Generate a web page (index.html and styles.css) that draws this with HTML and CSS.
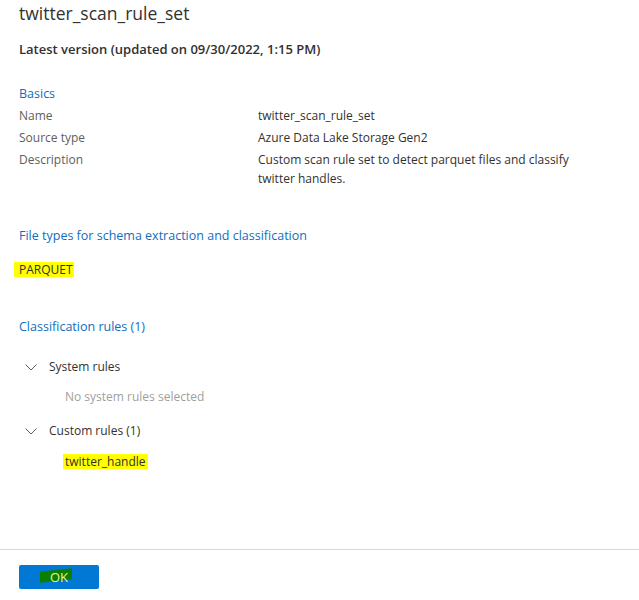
FILE: index.html
```html
<!DOCTYPE html>
<html>
<head>
<meta charset="utf-8">
<link rel="stylesheet" href="styles.css">
</head>
<body>
<div class="panel">
  <div class="content">
    <h1 class="title">twitter_scan_rule_set</h1>
    <div class="version">Latest version (updated on 09/30/2022, 1:15 PM)</div>

    <div class="section-head basics">Basics</div>
    <div class="props">
      <div class="label">Name</div><div class="value">twitter_scan_rule_set</div>
      <div class="label">Source type</div><div class="value">Azure Data Lake Storage Gen2</div>
      <div class="label">Description</div><div class="value">Custom scan rule set to detect parquet files and classify twitter handles.</div>
    </div>

    <div class="section-head filetypes">File types for schema extraction and classification</div>
    <div class="filetype"><span class="hl hl-parquet">PARQUET</span></div>

    <div class="section-head classrules">Classification rules (1)</div>
    <div class="group">
      <div class="group-head">
        <svg class="chev" width="12" height="7" viewBox="0 0 12 7"><path d="M0.5 0.5 L6 6 L11.5 0.5" fill="none" stroke="#605e5c" stroke-width="1"/></svg>
        <span>System rules</span>
      </div>
      <div class="group-body muted">No system rules selected</div>
    </div>
    <div class="group">
      <div class="group-head">
        <svg class="chev" width="12" height="7" viewBox="0 0 12 7"><path d="M0.5 0.5 L6 6 L11.5 0.5" fill="none" stroke="#605e5c" stroke-width="1"/></svg>
        <span>Custom rules (1)</span>
      </div>
      <div class="group-body"><span class="hl hl-rule">twitter_handle</span></div>
    </div>
  </div>
  <div class="footer">
    <button class="ok"><span class="ok-mark"></span><span class="ok-text">OK</span></button>
  </div>
</div>
</body>
</html>
```
FILE: styles.css
```css
html, body {
  margin: 0;
  padding: 0;
  background: #ffffff;
}
body {
  font-family: "Open Sans", "Noto Sans", sans-serif;
  color: #323130;
  font-size: 12px;
}
.panel {
  width: 639px;
  height: 600px;
  display: flex;
  flex-direction: column;
}
.content {
  flex: none;
  padding-left: 19px;
  height: 549px;
  box-sizing: border-box;
}
.title {
  margin: 0;
  font-size: 17.5px;
  font-weight: 400;
  line-height: 26px;
  color: #323130;
}
.version {
  margin-top: 13px;
  font-size: 13px;
  font-weight: 600;
  line-height: 20px;
}
.section-head {
  color: #106ebe;
  font-size: 12.5px;
  line-height: 20px;
}
.basics { margin-top: 25px; }
.props {
  margin-top: 2px;
  display: grid;
  grid-template-columns: 239px 330px;
  row-gap: 2px;
  line-height: 20px;
}
.label { color: #605e5c; }
.value { color: #323130; line-height: 19px; }
.filetypes { margin-top: 38px; }
.filetype {
  margin-top: 13px;
  margin-left: -5px;
  line-height: 20px;
  height: 20px;
  display: flex;
  align-items: center;
}
.hl {
  display: inline-block;
  background: #ffff00;
  color: #323130;
  line-height: 15px;
  height: 15px;
}
.hl-parquet { padding: 0 1px 0 5px; }
.classrules { margin-top: 38px; }
.group { margin-top: 20px; }
.group-head {
  display: flex;
  align-items: center;
  gap: 12px;
  padding-left: 6px;
  line-height: 20px;
  height: 20px;
}
.chev { flex: none; }
.group-body {
  padding-left: 46px;
  margin-top: 10px;
  line-height: 20px;
  height: 20px;
  display: flex;
  align-items: center;
}
.group + .group { margin-top: 14px; }
.muted { color: #a19f9d; }
.hl-rule { padding: 0 2px; margin-left: -2px; }
.footer {
  border-top: 1px solid #d8d8d8;
  padding: 15px 19px;
}
.ok {
  position: relative;
  width: 80px;
  height: 24px;
  border: none;
  border-radius: 2px;
  background: #0078d4;
  padding: 0;
  font-family: "Open Sans", sans-serif;
  font-size: 13px;
  display: flex;
  align-items: center;
  justify-content: center;
}
.ok-mark {
  position: absolute;
  left: 21px;
  top: 5px;
  width: 32px;
  height: 11px;
  background: #0a7f00;
  transform: skewY(-6deg);
}
.ok-text {
  position: relative;
  color: #e8f5a0;
}
```
